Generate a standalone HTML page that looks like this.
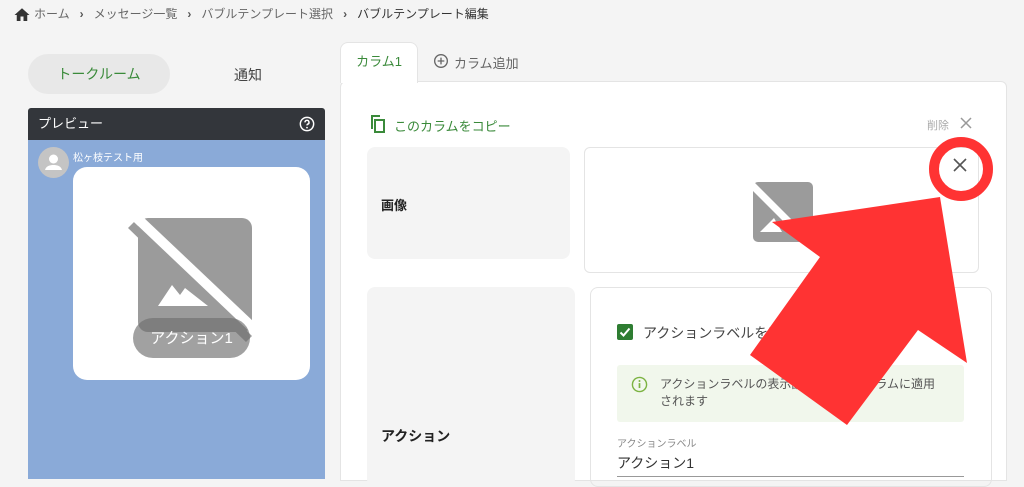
<!DOCTYPE html>
<html><head><meta charset="utf-8"><style>
*{margin:0;padding:0;box-sizing:border-box}
body{width:1024px;height:479px;overflow:hidden;background:#f4f4f4;font-family:"Liberation Sans","Noto Sans CJK JP",sans-serif;position:relative;color:#333}
.a{position:absolute}
.bc{font-size:12px;color:#666;top:5px;left:34px;white-space:nowrap}
.bc b{font-weight:normal;color:#333}
.sep{margin:0 10px;font-weight:bold;color:#555}
</style></head><body>
<svg class="a" style="left:13px;top:6px" width="18" height="15" viewBox="0 0 24 20"><path d="M10 20v-6h4v6h5v-8h3L12 3 2 12h3v8z" fill="#333"/></svg>
<div class="a bc">ホーム<span class="sep">›</span>メッセージ一覧<span class="sep">›</span>バブルテンプレート選択<span class="sep">›</span><b>バブルテンプレート編集</b></div>

<div class="a" style="left:28px;top:54px;width:142px;height:40px;border-radius:20px;background:#e8e8e8;color:#3a8a3a;font-size:14px;text-align:center;line-height:40px">トークルーム</div>
<div class="a" style="left:234px;top:65px;font-size:14px;color:#444">通知</div>

<div class="a" style="left:28px;top:108px;width:297px;height:32px;background:#33363b;border-radius:3px 3px 0 0;color:#fff;font-size:13px;line-height:32px;padding-left:10px">プレビュー
<svg class="a" style="right:10px;top:8px" width="16" height="16" viewBox="0 0 24 24"><circle cx="12" cy="12" r="10" fill="none" stroke="#fff" stroke-width="2.2"/><path d="M9 9.5a3 3 0 1 1 4 2.8c-.8.4-1 1-1 1.7" fill="none" stroke="#fff" stroke-width="2.2"/><circle cx="12" cy="17.5" r="1.3" fill="#fff"/></svg></div>
<div class="a" style="left:28px;top:140px;width:297px;height:339px;background:#8aaad8"></div>
<div class="a" style="left:38px;top:147px;width:31px;height:31px;border-radius:50%;background:#c4c4c4"><svg width="31" height="31" viewBox="0 0 31 31"><circle cx="15.5" cy="12" r="4.5" fill="#fff"/><path d="M7 23c1-4 5-5 8.5-5s7.5 1 8.5 5z" fill="#fff"/></svg></div>
<div class="a" style="left:73px;top:149px;font-size:10px;color:#fff">松ヶ枝テスト用</div>
<div class="a" style="left:73px;top:167px;width:237px;height:213px;background:#fff;border-radius:14px"></div>
<svg class="a" style="left:120px;top:210px" width="140" height="150" viewBox="0 0 140 150">
<rect x="18" y="8" width="114" height="114" rx="10" fill="#9b9b9b"/>
<path d="M8 18L14 12L132 126L126 132Z" fill="#9b9b9b"/>
<path d="M14 12L22 6L134 112L132 124Z" fill="#fff"/>
<path d="M38 96L52 75L60 85L65 78L88 96Z" fill="#fff"/>
</svg>
<div class="a" style="left:133px;top:318px;width:117px;height:40px;border-radius:20px;background:rgba(110,110,110,.65);color:#fff;font-size:15px;text-align:center;line-height:42px">アクション1</div>

<div class="a" style="left:340px;top:81px;width:667px;height:400px;background:#fff;border:1px solid #e4e4e4;border-radius:6px 6px 0 0"></div>
<div class="a" style="left:340px;top:42px;width:78px;height:41px;background:#fff;border:1px solid #e4e4e4;border-bottom:none;border-radius:8px 8px 0 0;color:#3a8a3a;font-size:13px;text-align:center;line-height:38px">カラム1</div>
<svg class="a" style="left:433px;top:53px" width="16" height="16" viewBox="0 0 24 24"><circle cx="12" cy="12" r="9.5" fill="none" stroke="#666" stroke-width="2"/><path d="M12 7v10M7 12h10" stroke="#666" stroke-width="2"/></svg>
<div class="a" style="left:454px;top:53px;font-size:13px;color:#666">カラム追加</div>

<svg class="a" style="left:370px;top:115px" width="16" height="18" viewBox="0 0 16 18"><path d="M2 2v12" stroke="#3a8a3a" stroke-width="2" fill="none"/><path d="M1 1h9" stroke="#3a8a3a" stroke-width="2"/><rect x="5" y="5" width="9" height="12" fill="none" stroke="#3a8a3a" stroke-width="2"/></svg>
<div class="a" style="left:394px;top:116px;font-size:13px;color:#3a8a3a">このカラムをコピー</div>
<div class="a" style="left:927px;top:117px;font-size:11px;color:#aaa">削除</div>
<svg class="a" style="left:960px;top:117px" width="12" height="12" viewBox="0 0 12 12"><path d="M1 1L11 11M11 1L1 11" stroke="#999" stroke-width="1.5"/></svg>

<div class="a" style="left:367px;top:147px;width:203px;height:112px;background:#f4f4f4;border-radius:8px"></div>
<div class="a" style="left:381px;top:195px;font-size:13px;font-weight:bold;color:#222">画像</div>
<div class="a" style="left:584px;top:147px;width:395px;height:126px;border:1px solid #e4e4e4;border-radius:6px"></div>
<svg class="a" style="left:748px;top:180px" width="70" height="65" viewBox="0 0 70 65"><rect x="5" y="2" width="60" height="60" rx="5" fill="#9b9b9b"/><path d="M0 6L5 1L66 62L61 67Z" fill="#fff"/><path d="M12 52L26 38L34 52Z" fill="#fff"/></svg>
<svg class="a" style="left:953px;top:158px" width="14" height="14" viewBox="0 0 14 14"><path d="M1 1L13 13M13 1L1 13" stroke="#555" stroke-width="1.6"/></svg>

<div class="a" style="left:367px;top:287px;width:208px;height:200px;background:#f4f4f4;border-radius:8px"></div>
<div class="a" style="left:381px;top:426px;font-size:14px;font-weight:bold;color:#222">アクション</div>
<div class="a" style="left:590px;top:287px;width:402px;height:200px;border:1px solid #e4e4e4;border-radius:8px"></div>
<div class="a" style="left:617px;top:324px;width:16px;height:16px;background:#2e7d32;border-radius:2px"><svg width="16" height="16" viewBox="0 0 16 16"><path d="M3.5 8.5L6.5 11.5L12.5 4.5" stroke="#fff" stroke-width="2" fill="none"/></svg></div>
<div class="a" style="left:643px;top:323px;font-size:14px;color:#444">アクションラベルを表示する</div>
<div class="a" style="left:617px;top:365px;width:347px;height:57px;background:#f1f7ec;border-radius:3px"></div>
<svg class="a" style="left:631px;top:376px" width="17" height="17" viewBox="0 0 24 24"><circle cx="12" cy="12" r="10" fill="none" stroke="#7cb342" stroke-width="2"/><path d="M12 10v7" stroke="#7cb342" stroke-width="2.4"/><circle cx="12" cy="7" r="1.4" fill="#7cb342"/></svg>
<div class="a" style="left:660px;top:376px;width:292px;font-size:12px;line-height:17px;color:#555">アクションラベルの表示設定は全てのカラムに適用<br>されます</div>
<div class="a" style="left:617px;top:435px;font-size:10px;color:#888">アクションラベル</div>
<div class="a" style="left:617px;top:453px;font-size:14px;color:#333">アクション1</div>
<div class="a" style="left:617px;top:476px;width:347px;height:1px;background:#999"></div>

<svg class="a" style="left:0;top:0" width="1024" height="479" viewBox="0 0 1024 479">
<circle cx="961" cy="169" r="27" fill="none" stroke="#ff3333" stroke-width="10"/>
<path d="M940 197L772 222L820 257L750 355L847 425L918 330L967 363Z" fill="#ff3333"/>
</svg>
</body></html>
